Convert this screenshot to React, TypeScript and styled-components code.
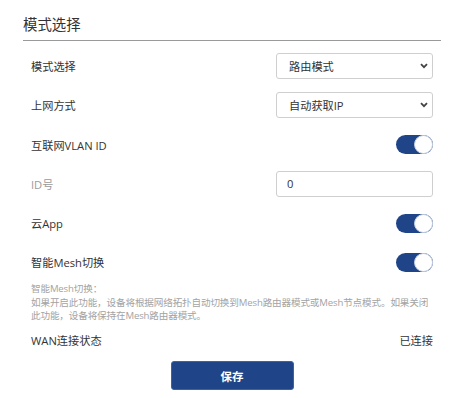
import React, { useState } from "react";
import styled, { createGlobalStyle } from "styled-components";

const GlobalStyle = createGlobalStyle`
  html, body {
    margin: 0;
    padding: 0;
    background: #fff;
  }
  body {
    font-family: "Open Sans", "Noto Sans CJK SC", sans-serif;
    color: #333;
  }
`;

const Page = styled.div`
  width: 418px;
  padding: 0 0 0 23px;
`;

const Header = styled.div`
  padding: 14px 0 4px;
  line-height: 22px;
  font-size: 14.4px;
  color: #333;
  border-bottom: 1px solid #9a9a9a;
`;

const Form = styled.div`
  display: flex;
  flex-direction: column;
  gap: 13.3px;
  margin: 12px 8px 0;
`;

const Row = styled.div<{ $pull?: number }>`
  display: flex;
  align-items: center;
  justify-content: space-between;
  height: 26px;
  margin-top: ${(p) => (p.$pull ? `-${p.$pull}px` : "0")};
`;

const Label = styled.span<{ $muted?: boolean }>`
  font-size: 11.2px;
  color: ${(p) => (p.$muted ? "#9a9a9a" : "#333")};
`;

const SelectWrap = styled.div`
  position: relative;
  width: 157px;
  height: 26px;
`;

const Select = styled.select`
  appearance: none;
  width: 100%;
  height: 100%;
  box-sizing: border-box;
  border: 1px solid #cfcfcf;
  border-radius: 3px;
  background: #fff;
  padding: 0 20px 0 12px;
  font-family: inherit;
  font-size: 11.2px;
  color: #333;
  outline: none;
`;

const Chevron = styled.svg`
  position: absolute;
  right: 5px;
  top: 10px;
  pointer-events: none;
`;

const TextInput = styled.input`
  width: 157px;
  height: 26px;
  box-sizing: border-box;
  border: 1px solid #cfcfcf;
  border-radius: 3px;
  padding: 0 10px;
  font-family: inherit;
  font-size: 11.2px;
  color: #333;
  outline: none;
`;

const Track = styled.button<{ $on: boolean }>`
  position: relative;
  width: 37px;
  height: 19px;
  padding: 0;
  border: none;
  border-radius: 10px;
  background: ${(p) => (p.$on ? "#1f4487" : "#ccc")};
  cursor: pointer;
`;

const Knob = styled.span<{ $on: boolean }>`
  position: absolute;
  top: 0;
  left: ${(p) => (p.$on ? "18px" : "0")};
  width: 19px;
  height: 19px;
  box-sizing: border-box;
  border-radius: 50%;
  background: #fff;
  border: 1px solid #c9d3e6;
`;

const Note = styled.div`
  margin: -6.5px 0 0;
  font-size: 9.6px;
  line-height: 13.5px;
  letter-spacing: -0.15px;
  color: #a3a3a3;
`;

const Status = styled.span`
  font-size: 11.2px;
  color: #333;
`;

const Footer = styled.div`
  display: flex;
  justify-content: center;
  margin-top: -5px;
`;

const SaveButton = styled.button`
  width: 123px;
  height: 29px;
  border: 1px solid #3b62a6;
  border-radius: 3px;
  background: #1f4487;
  color: #fff;
  font-family: inherit;
  font-size: 11.5px;
  font-weight: 600;
  cursor: pointer;
`;

const Toggle: React.FC<{ on: boolean; onChange: () => void }> = ({ on, onChange }) => (
  <Track $on={on} onClick={onChange}>
    <Knob $on={on} />
  </Track>
);

const Dropdown: React.FC<{ value: string; options: string[] }> = ({ value, options }) => (
  <SelectWrap>
    <Select defaultValue={value}>
      {options.map((o) => (
        <option key={o}>{o}</option>
      ))}
    </Select>
    <Chevron width="8" height="6" viewBox="0 0 8 6">
      <path d="M1 1.2 L4 4.2 L7 1.2" fill="none" stroke="#444" strokeWidth="1.8" />
    </Chevron>
  </SelectWrap>
);

const App: React.FC = () => {
  const [vlan, setVlan] = useState(true);
  const [cloud, setCloud] = useState(true);
  const [mesh, setMesh] = useState(true);

  return (
    <Page>
      <GlobalStyle />
      <Header>模式选择</Header>
      <Form>
        <Row>
          <Label>模式选择</Label>
          <Dropdown value="路由模式" options={["路由模式", "中继模式", "AP模式"]} />
        </Row>
        <Row>
          <Label>上网方式</Label>
          <Dropdown value="自动获取IP" options={["自动获取IP", "PPPoE", "静态IP"]} />
        </Row>
        <Row>
          <Label>互联网VLAN ID</Label>
          <Toggle on={vlan} onChange={() => setVlan(!vlan)} />
        </Row>
        <Row>
          <Label $muted>ID号</Label>
          <TextInput defaultValue="0" />
        </Row>
        <Row>
          <Label>云App</Label>
          <Toggle on={cloud} onChange={() => setCloud(!cloud)} />
        </Row>
        <Row>
          <Label>智能Mesh切换</Label>
          <Toggle on={mesh} onChange={() => setMesh(!mesh)} />
        </Row>
        <Note>
          智能Mesh切换：
          <br />
          如果开启此功能，设备将根据网络拓扑自动切换到Mesh路由器模式或Mesh节点模式。如果关闭此功能，设备将保持在Mesh路由器模式。
        </Note>
        <Row $pull={9}>
          <Label>WAN连接状态</Label>
          <Status>已连接</Status>
        </Row>
        <Footer>
          <SaveButton>保存</SaveButton>
        </Footer>
      </Form>
    </Page>
  );
};

export default App;
